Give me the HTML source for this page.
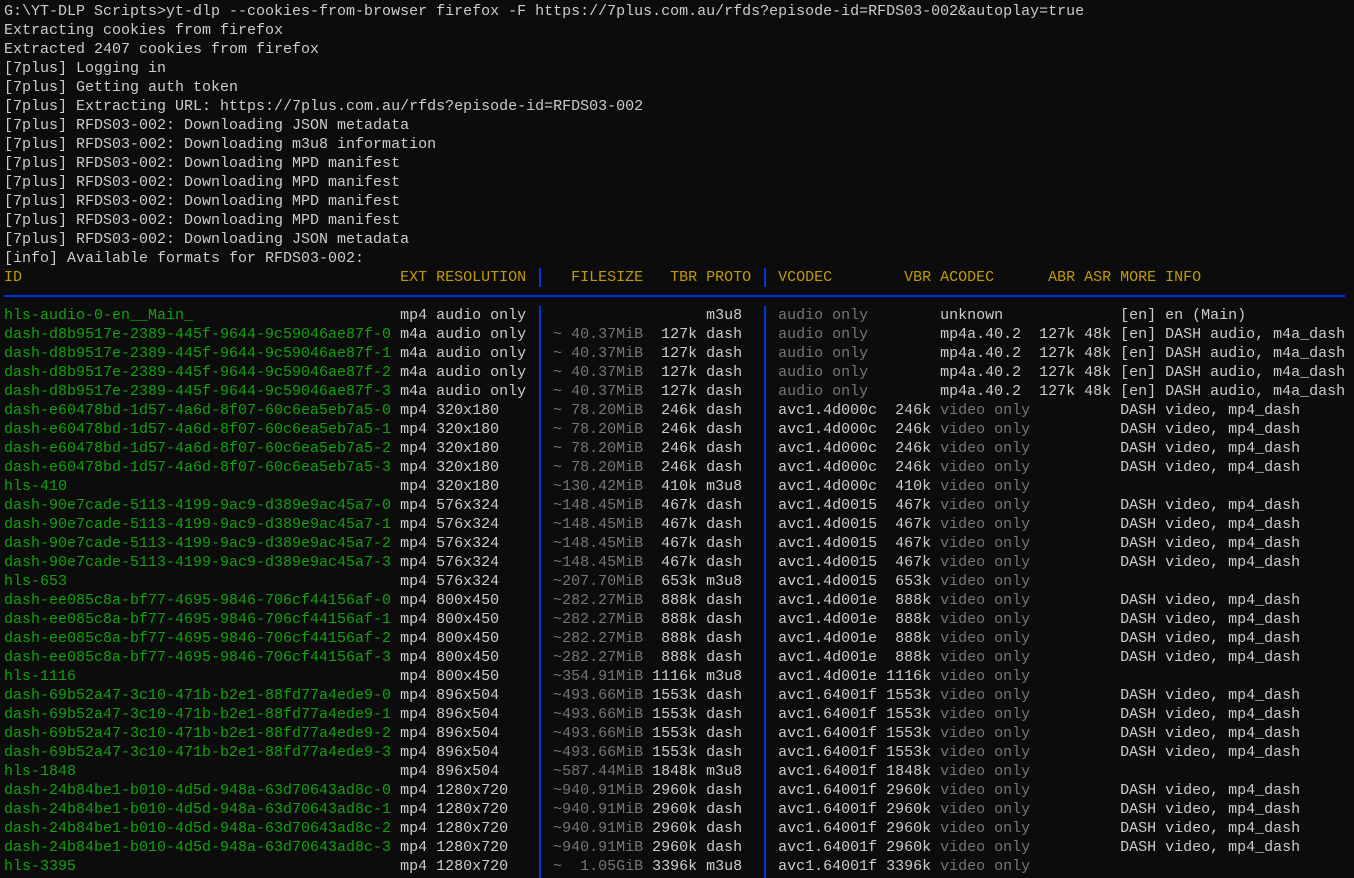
<!DOCTYPE html>
<html><head><meta charset="utf-8"><style>
html,body{margin:0;padding:0;background:#0c0c0c;width:1354px;height:878px;overflow:hidden}
#t{position:absolute;left:4px;top:2px;font-family:"Liberation Mono",monospace;font-size:15px;line-height:19px;color:#cccccc;white-space:normal}
.l{height:19px;white-space:pre;overflow:hidden;width:1350px}
.l span{display:inline-block;box-sizing:border-box;white-space:pre;vertical-align:top}
.i{width:44ch;color:#13a10e}.e{width:4ch}.r{width:11ch}.s{width:2ch}
.f{width:10ch;text-align:right}.t{width:6ch;text-align:right}.p{width:7ch;padding-left:1ch}
.v{width:11ch}.vb{width:6ch;text-align:right}.a{width:11ch;padding-left:1ch}
.ab{width:5ch;text-align:right}.as{width:4ch;text-align:right}.m{padding-left:1ch}
.d{color:#767676}.h span{color:#c19c00}.h .i{color:#c19c00}
.bar{position:absolute;width:2px;background:#0037da}
</style></head><body>
<div id="t"><div class="l">G:\YT-DLP Scripts&gt;yt-dlp --cookies-from-browser firefox -F https://7plus.com.au/rfds?episode-id=RFDS03-002&amp;autoplay=true</div><div class="l">Extracting cookies from firefox</div><div class="l">Extracted 2407 cookies from firefox</div><div class="l">[7plus] Logging in</div><div class="l">[7plus] Getting auth token</div><div class="l">[7plus] Extracting URL: https://7plus.com.au/rfds?episode-id=RFDS03-002</div><div class="l">[7plus] RFDS03-002: Downloading JSON metadata</div><div class="l">[7plus] RFDS03-002: Downloading m3u8 information</div><div class="l">[7plus] RFDS03-002: Downloading MPD manifest</div><div class="l">[7plus] RFDS03-002: Downloading MPD manifest</div><div class="l">[7plus] RFDS03-002: Downloading MPD manifest</div><div class="l">[7plus] RFDS03-002: Downloading MPD manifest</div><div class="l">[7plus] RFDS03-002: Downloading JSON metadata</div><div class="l">[info] Available formats for RFDS03-002:</div><div class="l h"><span class="i">ID</span><span class="e">EXT</span><span class="r">RESOLUTION</span><span class="s"></span><span class="f">FILESIZE</span><span class="t">TBR</span><span class="p">PROTO</span><span class="s"></span><span class="v">VCODEC</span><span class="vb">VBR</span><span class="a">ACODEC</span><span class="ab">ABR</span><span class="as">ASR</span><span class="m">MORE INFO</span></div><div class="l"></div><div class="l"><span class="i">hls-audio-0-en__Main_</span><span class="e">mp4</span><span class="r">audio only</span><span class="s"></span><span class="f"></span><span class="t"></span><span class="p">m3u8</span><span class="s"></span><span class="v d">audio only</span><span class="vb"></span><span class="a">unknown</span><span class="ab"></span><span class="as"></span><span class="m">[en] en (Main)</span></div><div class="l"><span class="i">dash-d8b9517e-2389-445f-9644-9c59046ae87f-0</span><span class="e">m4a</span><span class="r">audio only</span><span class="s"></span><span class="f d">~ 40.37MiB</span><span class="t">127k</span><span class="p">dash</span><span class="s"></span><span class="v d">audio only</span><span class="vb"></span><span class="a">mp4a.40.2</span><span class="ab">127k</span><span class="as">48k</span><span class="m">[en] DASH audio, m4a_dash</span></div><div class="l"><span class="i">dash-d8b9517e-2389-445f-9644-9c59046ae87f-1</span><span class="e">m4a</span><span class="r">audio only</span><span class="s"></span><span class="f d">~ 40.37MiB</span><span class="t">127k</span><span class="p">dash</span><span class="s"></span><span class="v d">audio only</span><span class="vb"></span><span class="a">mp4a.40.2</span><span class="ab">127k</span><span class="as">48k</span><span class="m">[en] DASH audio, m4a_dash</span></div><div class="l"><span class="i">dash-d8b9517e-2389-445f-9644-9c59046ae87f-2</span><span class="e">m4a</span><span class="r">audio only</span><span class="s"></span><span class="f d">~ 40.37MiB</span><span class="t">127k</span><span class="p">dash</span><span class="s"></span><span class="v d">audio only</span><span class="vb"></span><span class="a">mp4a.40.2</span><span class="ab">127k</span><span class="as">48k</span><span class="m">[en] DASH audio, m4a_dash</span></div><div class="l"><span class="i">dash-d8b9517e-2389-445f-9644-9c59046ae87f-3</span><span class="e">m4a</span><span class="r">audio only</span><span class="s"></span><span class="f d">~ 40.37MiB</span><span class="t">127k</span><span class="p">dash</span><span class="s"></span><span class="v d">audio only</span><span class="vb"></span><span class="a">mp4a.40.2</span><span class="ab">127k</span><span class="as">48k</span><span class="m">[en] DASH audio, m4a_dash</span></div><div class="l"><span class="i">dash-e60478bd-1d57-4a6d-8f07-60c6ea5eb7a5-0</span><span class="e">mp4</span><span class="r">320x180</span><span class="s"></span><span class="f d">~ 78.20MiB</span><span class="t">246k</span><span class="p">dash</span><span class="s"></span><span class="v">avc1.4d000c</span><span class="vb">246k</span><span class="a d">video only</span><span class="ab"></span><span class="as"></span><span class="m">DASH video, mp4_dash</span></div><div class="l"><span class="i">dash-e60478bd-1d57-4a6d-8f07-60c6ea5eb7a5-1</span><span class="e">mp4</span><span class="r">320x180</span><span class="s"></span><span class="f d">~ 78.20MiB</span><span class="t">246k</span><span class="p">dash</span><span class="s"></span><span class="v">avc1.4d000c</span><span class="vb">246k</span><span class="a d">video only</span><span class="ab"></span><span class="as"></span><span class="m">DASH video, mp4_dash</span></div><div class="l"><span class="i">dash-e60478bd-1d57-4a6d-8f07-60c6ea5eb7a5-2</span><span class="e">mp4</span><span class="r">320x180</span><span class="s"></span><span class="f d">~ 78.20MiB</span><span class="t">246k</span><span class="p">dash</span><span class="s"></span><span class="v">avc1.4d000c</span><span class="vb">246k</span><span class="a d">video only</span><span class="ab"></span><span class="as"></span><span class="m">DASH video, mp4_dash</span></div><div class="l"><span class="i">dash-e60478bd-1d57-4a6d-8f07-60c6ea5eb7a5-3</span><span class="e">mp4</span><span class="r">320x180</span><span class="s"></span><span class="f d">~ 78.20MiB</span><span class="t">246k</span><span class="p">dash</span><span class="s"></span><span class="v">avc1.4d000c</span><span class="vb">246k</span><span class="a d">video only</span><span class="ab"></span><span class="as"></span><span class="m">DASH video, mp4_dash</span></div><div class="l"><span class="i">hls-410</span><span class="e">mp4</span><span class="r">320x180</span><span class="s"></span><span class="f d">~130.42MiB</span><span class="t">410k</span><span class="p">m3u8</span><span class="s"></span><span class="v">avc1.4d000c</span><span class="vb">410k</span><span class="a d">video only</span></div><div class="l"><span class="i">dash-90e7cade-5113-4199-9ac9-d389e9ac45a7-0</span><span class="e">mp4</span><span class="r">576x324</span><span class="s"></span><span class="f d">~148.45MiB</span><span class="t">467k</span><span class="p">dash</span><span class="s"></span><span class="v">avc1.4d0015</span><span class="vb">467k</span><span class="a d">video only</span><span class="ab"></span><span class="as"></span><span class="m">DASH video, mp4_dash</span></div><div class="l"><span class="i">dash-90e7cade-5113-4199-9ac9-d389e9ac45a7-1</span><span class="e">mp4</span><span class="r">576x324</span><span class="s"></span><span class="f d">~148.45MiB</span><span class="t">467k</span><span class="p">dash</span><span class="s"></span><span class="v">avc1.4d0015</span><span class="vb">467k</span><span class="a d">video only</span><span class="ab"></span><span class="as"></span><span class="m">DASH video, mp4_dash</span></div><div class="l"><span class="i">dash-90e7cade-5113-4199-9ac9-d389e9ac45a7-2</span><span class="e">mp4</span><span class="r">576x324</span><span class="s"></span><span class="f d">~148.45MiB</span><span class="t">467k</span><span class="p">dash</span><span class="s"></span><span class="v">avc1.4d0015</span><span class="vb">467k</span><span class="a d">video only</span><span class="ab"></span><span class="as"></span><span class="m">DASH video, mp4_dash</span></div><div class="l"><span class="i">dash-90e7cade-5113-4199-9ac9-d389e9ac45a7-3</span><span class="e">mp4</span><span class="r">576x324</span><span class="s"></span><span class="f d">~148.45MiB</span><span class="t">467k</span><span class="p">dash</span><span class="s"></span><span class="v">avc1.4d0015</span><span class="vb">467k</span><span class="a d">video only</span><span class="ab"></span><span class="as"></span><span class="m">DASH video, mp4_dash</span></div><div class="l"><span class="i">hls-653</span><span class="e">mp4</span><span class="r">576x324</span><span class="s"></span><span class="f d">~207.70MiB</span><span class="t">653k</span><span class="p">m3u8</span><span class="s"></span><span class="v">avc1.4d0015</span><span class="vb">653k</span><span class="a d">video only</span></div><div class="l"><span class="i">dash-ee085c8a-bf77-4695-9846-706cf44156af-0</span><span class="e">mp4</span><span class="r">800x450</span><span class="s"></span><span class="f d">~282.27MiB</span><span class="t">888k</span><span class="p">dash</span><span class="s"></span><span class="v">avc1.4d001e</span><span class="vb">888k</span><span class="a d">video only</span><span class="ab"></span><span class="as"></span><span class="m">DASH video, mp4_dash</span></div><div class="l"><span class="i">dash-ee085c8a-bf77-4695-9846-706cf44156af-1</span><span class="e">mp4</span><span class="r">800x450</span><span class="s"></span><span class="f d">~282.27MiB</span><span class="t">888k</span><span class="p">dash</span><span class="s"></span><span class="v">avc1.4d001e</span><span class="vb">888k</span><span class="a d">video only</span><span class="ab"></span><span class="as"></span><span class="m">DASH video, mp4_dash</span></div><div class="l"><span class="i">dash-ee085c8a-bf77-4695-9846-706cf44156af-2</span><span class="e">mp4</span><span class="r">800x450</span><span class="s"></span><span class="f d">~282.27MiB</span><span class="t">888k</span><span class="p">dash</span><span class="s"></span><span class="v">avc1.4d001e</span><span class="vb">888k</span><span class="a d">video only</span><span class="ab"></span><span class="as"></span><span class="m">DASH video, mp4_dash</span></div><div class="l"><span class="i">dash-ee085c8a-bf77-4695-9846-706cf44156af-3</span><span class="e">mp4</span><span class="r">800x450</span><span class="s"></span><span class="f d">~282.27MiB</span><span class="t">888k</span><span class="p">dash</span><span class="s"></span><span class="v">avc1.4d001e</span><span class="vb">888k</span><span class="a d">video only</span><span class="ab"></span><span class="as"></span><span class="m">DASH video, mp4_dash</span></div><div class="l"><span class="i">hls-1116</span><span class="e">mp4</span><span class="r">800x450</span><span class="s"></span><span class="f d">~354.91MiB</span><span class="t">1116k</span><span class="p">m3u8</span><span class="s"></span><span class="v">avc1.4d001e</span><span class="vb">1116k</span><span class="a d">video only</span></div><div class="l"><span class="i">dash-69b52a47-3c10-471b-b2e1-88fd77a4ede9-0</span><span class="e">mp4</span><span class="r">896x504</span><span class="s"></span><span class="f d">~493.66MiB</span><span class="t">1553k</span><span class="p">dash</span><span class="s"></span><span class="v">avc1.64001f</span><span class="vb">1553k</span><span class="a d">video only</span><span class="ab"></span><span class="as"></span><span class="m">DASH video, mp4_dash</span></div><div class="l"><span class="i">dash-69b52a47-3c10-471b-b2e1-88fd77a4ede9-1</span><span class="e">mp4</span><span class="r">896x504</span><span class="s"></span><span class="f d">~493.66MiB</span><span class="t">1553k</span><span class="p">dash</span><span class="s"></span><span class="v">avc1.64001f</span><span class="vb">1553k</span><span class="a d">video only</span><span class="ab"></span><span class="as"></span><span class="m">DASH video, mp4_dash</span></div><div class="l"><span class="i">dash-69b52a47-3c10-471b-b2e1-88fd77a4ede9-2</span><span class="e">mp4</span><span class="r">896x504</span><span class="s"></span><span class="f d">~493.66MiB</span><span class="t">1553k</span><span class="p">dash</span><span class="s"></span><span class="v">avc1.64001f</span><span class="vb">1553k</span><span class="a d">video only</span><span class="ab"></span><span class="as"></span><span class="m">DASH video, mp4_dash</span></div><div class="l"><span class="i">dash-69b52a47-3c10-471b-b2e1-88fd77a4ede9-3</span><span class="e">mp4</span><span class="r">896x504</span><span class="s"></span><span class="f d">~493.66MiB</span><span class="t">1553k</span><span class="p">dash</span><span class="s"></span><span class="v">avc1.64001f</span><span class="vb">1553k</span><span class="a d">video only</span><span class="ab"></span><span class="as"></span><span class="m">DASH video, mp4_dash</span></div><div class="l"><span class="i">hls-1848</span><span class="e">mp4</span><span class="r">896x504</span><span class="s"></span><span class="f d">~587.44MiB</span><span class="t">1848k</span><span class="p">m3u8</span><span class="s"></span><span class="v">avc1.64001f</span><span class="vb">1848k</span><span class="a d">video only</span></div><div class="l"><span class="i">dash-24b84be1-b010-4d5d-948a-63d70643ad8c-0</span><span class="e">mp4</span><span class="r">1280x720</span><span class="s"></span><span class="f d">~940.91MiB</span><span class="t">2960k</span><span class="p">dash</span><span class="s"></span><span class="v">avc1.64001f</span><span class="vb">2960k</span><span class="a d">video only</span><span class="ab"></span><span class="as"></span><span class="m">DASH video, mp4_dash</span></div><div class="l"><span class="i">dash-24b84be1-b010-4d5d-948a-63d70643ad8c-1</span><span class="e">mp4</span><span class="r">1280x720</span><span class="s"></span><span class="f d">~940.91MiB</span><span class="t">2960k</span><span class="p">dash</span><span class="s"></span><span class="v">avc1.64001f</span><span class="vb">2960k</span><span class="a d">video only</span><span class="ab"></span><span class="as"></span><span class="m">DASH video, mp4_dash</span></div><div class="l"><span class="i">dash-24b84be1-b010-4d5d-948a-63d70643ad8c-2</span><span class="e">mp4</span><span class="r">1280x720</span><span class="s"></span><span class="f d">~940.91MiB</span><span class="t">2960k</span><span class="p">dash</span><span class="s"></span><span class="v">avc1.64001f</span><span class="vb">2960k</span><span class="a d">video only</span><span class="ab"></span><span class="as"></span><span class="m">DASH video, mp4_dash</span></div><div class="l"><span class="i">dash-24b84be1-b010-4d5d-948a-63d70643ad8c-3</span><span class="e">mp4</span><span class="r">1280x720</span><span class="s"></span><span class="f d">~940.91MiB</span><span class="t">2960k</span><span class="p">dash</span><span class="s"></span><span class="v">avc1.64001f</span><span class="vb">2960k</span><span class="a d">video only</span><span class="ab"></span><span class="as"></span><span class="m">DASH video, mp4_dash</span></div><div class="l"><span class="i">hls-3395</span><span class="e">mp4</span><span class="r">1280x720</span><span class="s"></span><span class="f d">~  1.05GiB</span><span class="t">3396k</span><span class="p">m3u8</span><span class="s"></span><span class="v">avc1.64001f</span><span class="vb">3396k</span><span class="a d">video only</span></div></div>
<div class="bar" style="left:539px;top:268px;height:19px"></div>
<div class="bar" style="left:764px;top:268px;height:19px"></div>
<div class="bar" style="left:539px;top:306px;height:572px"></div>
<div class="bar" style="left:764px;top:306px;height:572px"></div>
<div class="bar" style="left:4px;top:295px;width:1341px;height:2px"></div>
</body></html>
